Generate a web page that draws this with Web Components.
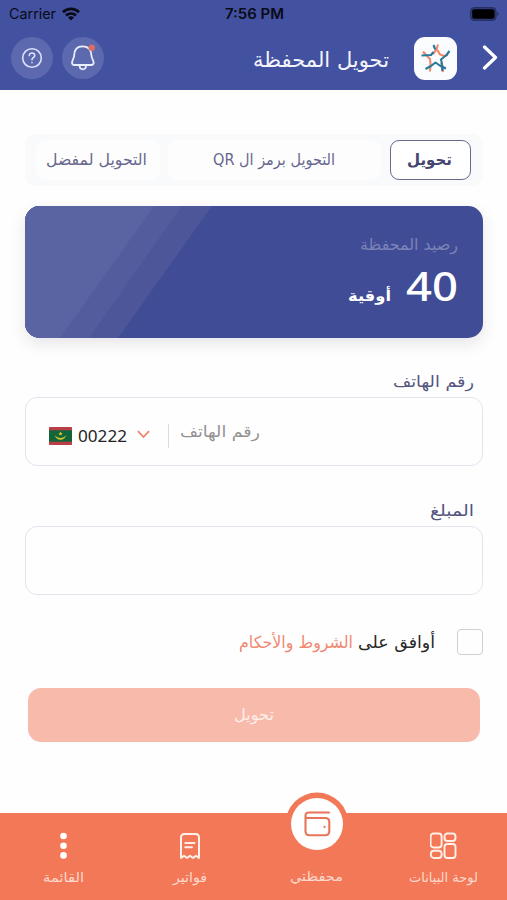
<!DOCTYPE html>
<html lang="ar">
<head>
<meta charset="utf-8">
<title>تحويل المحفظة</title>
<style>
html,body{margin:0;padding:0;background:#fefefe}
body{width:507px;height:900px;overflow:hidden;font-family:"DejaVu Sans","Noto Sans",sans-serif}
</style>
</head>
<body>
<wallet-app></wallet-app>
<script>
// Single line of text condensed or widened to the width given in `w`.
class FitText extends HTMLElement{
  connectedCallback(){
    const r=this.attachShadow({mode:'open'});
    r.innerHTML=`<style>
      :host{display:block;flex:none;height:20px;line-height:20px;white-space:nowrap;direction:ltr;text-align:left}
      span{display:inline-block;transform-origin:0 50%;line-height:inherit;vertical-align:top}
      :host([rtl]) span{direction:rtl}
    </style><span><slot></slot></span>`;
    const w=+this.getAttribute('w'), s=r.querySelector('span');
    this.style.width=w+'px';
    s.style.transform=`scaleX(${w/s.getBoundingClientRect().width})`;
  }
}
class StatusBar extends HTMLElement{
  constructor(){super();this.attachShadow({mode:'open'}).innerHTML=`<style>
    :host{display:grid;grid-template-columns:1fr auto 1fr;align-items:center;height:27px;box-sizing:border-box;padding:0 8px 0 9px;color:#090b17;font-family:Inter,sans-serif;font-size:14.5px;direction:ltr}
    .l{display:flex;align-items:center;gap:6px}
    .t{font-weight:600;font-size:14px}
    .b{justify-self:end}
    svg{display:block}
    </style>
    <div class="l"><fit-text w="47">Carrier</fit-text>
    <svg width="18" height="14" viewBox="0 0 18 14" fill="none" stroke="#090b17" stroke-width="2.7"><path d="M1 5.3C5.5 .8 12.500 .8 17 5.300"/><path d="M4 8.500C6.800 5.800 11.200 5.800 14 8.500"/><path d="M9 13.500L6 10.400C7.800 8.900 10.200 8.900 12 10.400Z" fill="#090b17" stroke="none"/></svg></div>
    <fit-text class="t" w="59">7:56 PM</fit-text>
    <svg class="b" width="29" height="14" viewBox="0 0 29 14"><rect x=".6" y=".6" width="25.500" height="12.800" rx="3.500" fill="#303b78" stroke="#252d5e"/><rect x="2.200" y="2.200" width="22.300" height="9.600" rx="1.800" fill="#000"/><path d="M27.300 5v4q1.300-.6 1.300-2t-1.300-2" fill="#252d5e"/></svg>`}
}
class AppHeader extends HTMLElement{
  constructor(){super();this.attachShadow({mode:'open'}).innerHTML=`<style>
    :host{display:block;height:90px;background:#4351a1}
    .row{display:flex;align-items:center;height:62px;padding:0 9px 0 11px;direction:ltr}
    .c{width:42px;height:42px;border-radius:50%;background:#5d69af;display:grid;place-items:center;margin-right:9px}
    .title{margin-left:auto;color:#f4f5fb;font-size:21px;padding-top:4px;margin-right:25px}
    .logo{width:43px;height:43px;border-radius:11px;background:#fbfcfd;display:grid;place-items:center;margin-right:25px}
    svg{display:block}
    </style><status-bar></status-bar>
    <div class="row">
      <div class="c"><svg width="22" height="22" viewBox="0 0 22 22" fill="none" stroke="#dce2fa" stroke-width="1.600" stroke-linecap="round"><circle cx="11" cy="11" r="9.300"/><path d="M8.300 8.600C8.300 5 13.700 5.200 13.700 8.500C13.700 10.600 11 10.600 11 12.700M11 15.500V15.700"/></svg></div>
      <div class="c"><svg width="28" height="30" viewBox="0 0 28 30" fill="none" stroke="#e9eefc" stroke-width="1.800" stroke-linejoin="round"><path d="M13.500 3.300C7.600 3.300 5.300 7.600 5.200 12.300C5.100 15.800 3 17.300 3 19.800C3 21.500 4 22 5.500 22H22C23.700 22 24.700 21.500 24.700 19.800C24.700 17.300 22.500 15.800 22.400 12.300C22.200 7.600 19.800 3.300 13.500 3.300Z"/><path d="M10.500 22.500C10.900 27.600 16.600 27.600 17.200 22.500"/><circle cx="22.800" cy="4.800" r="3.200" fill="#dc6c66" stroke="none"/></svg></div>
      <fit-text class="title" w="136">تحويل المحفظة</fit-text>
      <div class="logo"><svg width="32" height="32" viewBox="0 0 32 32" fill="none" stroke-width="2.100" stroke-linejoin="round">
        <path stroke="#f2896b" d="M18 2.500L16.500 7.500L13 12M17.500 8L19.700 12.300L24 14L28 13M3 9.500L6 13L10 17L10.500 22L10 29.500M21 21L23.500 25.500L22.500 30"/>
        <path stroke="#28799a" d="M13.500 3L15.300 7.500M1.500 13.500L11 13L13.500 10M29.500 9L26.500 13L21 17.500L21.800 21L22.300 29M5.500 27L11 24L15.500 20.500L20.500 24L26 26.500"/>
      </svg></div>
      <svg width="16" height="26" viewBox="0 0 16 26" fill="none" stroke="#fff" stroke-width="3.200" stroke-linecap="round" stroke-linejoin="round"><path d="M2.500 2L13.500 12.500L2.500 23"/></svg>
    </div>`}
}
class TransferTabs extends HTMLElement{
  constructor(){super();this.attachShadow({mode:'open'}).innerHTML=`<style>
    :host{display:grid;grid-template-columns:124px 213px 81px;column-gap:8.500px;height:52px;box-sizing:border-box;padding:6px 10.500px;border-radius:10px;background:#f9fafb;direction:ltr;color:#67678d;font-size:16px}
    div{display:grid;place-items:center;background:#fdfdfe;border-radius:9px;height:40px;box-sizing:border-box;padding-right:2px}
    .on{background:#fff;border:1.500px solid #69698e;color:#45456f;font-weight:bold}
    </style><div><fit-text w="101">التحويل لمفضل</fit-text></div><div><fit-text rtl w="122">التحويل برمز ال QR</fit-text></div><div class="on"><fit-text w="45">تحويل</fit-text></div>`}
}
class BalanceCard extends HTMLElement{
  constructor(){super();this.attachShadow({mode:'open'}).innerHTML=`<style>
    :host{display:grid;height:132px;border-radius:15px;overflow:hidden;background:#404c95;box-shadow:0 6px 16px rgba(40,40,60,.11);direction:ltr}
    svg,.in{grid-area:1/1}
    .in{display:flex;flex-direction:column;align-items:flex-end;padding:29px 25px 0 0}
    .cap{color:#7b83b7;font-size:16px}
    .amt{display:flex;align-items:baseline;gap:15px;margin-top:9px;color:#fff;font-weight:bold}
    .n{font:500 40.500px "Noto Sans",sans-serif;height:44px;line-height:44px}
    .u{font-size:15px}
    </style>
    <svg width="458" height="132" viewBox="0 0 458 132"><path d="M0 0H187L93 132H0Z" fill="#4c5699"/><path d="M0 0H157L64 132H0Z" fill="#535d9d"/><path d="M0 0H129L35 132H0Z" fill="#5b64a3"/></svg>
    <div class="in"><fit-text class="cap" w="98">رصيد المحفظة</fit-text>
    <div class="amt"><fit-text class="u" w="43">أوقية</fit-text><fit-text class="n" w="52">40</fit-text></div></div>`}
}
class FormField extends HTMLElement{
  constructor(){super();this.attachShadow({mode:'open'}).innerHTML=`<style>
    :host{display:flex;flex-direction:column;align-items:flex-end;direction:ltr;color:#54547e;font-size:16px}
    .lab{padding-right:9px}
    .box{width:100%;height:69px;box-sizing:border-box;border:1.500px solid #e3e3ee;border-radius:12px;background:#fefefe;margin-top:5px;display:flex;align-items:center;padding-left:23px}
    </style><div class="lab"><slot name="label"></slot></div><div class="box"><slot></slot></div>`}
}
class CountryCode extends HTMLElement{
  constructor(){super();this.attachShadow({mode:'open'}).innerHTML=`<style>
    :host{display:flex;align-items:center;direction:ltr}
    svg{display:block}
    .n{font:16.500px "Noto Sans",sans-serif;line-height:20px;color:#242424;margin-left:6px;padding-top:8px}
    .v{margin:6px 0 0 10px}
    .f{margin-top:9px}
    i{width:1px;height:24px;background:#dcdce4;margin:9px 11px 0 18px}
    </style><svg class="f" width="23" height="18" viewBox="0 0 23 18"><rect width="23" height="18" rx=".8" fill="#b84045"/><path d="M0 3.300H23V14.700H0Z" fill="#12653b"/><path d="M5.500 7.500C7 14.500 16 14.500 17.500 7.500C15.500 12 7.500 12 5.500 7.500Z" fill="#d8c52c"/><path d="M11.500 4.500l.7 1.500 1.500.1-1.200 1 .4 1.500-1.400-.8-1.400.8.400-1.500-1.200-1 1.500-.1Z" fill="#d8c52c"/></svg>
    <fit-text class="n" w="49">00222</fit-text>
    <svg class="v" width="13" height="9" viewBox="0 0 13 9" fill="none" stroke="#f0826b" stroke-width="1.700"><path d="M1 1.200L6.500 7L12 1.200"/></svg><i></i>`}
}
class TermsCheck extends HTMLElement{
  constructor(){super();this.attachShadow({mode:'open'}).innerHTML=`<style>
    :host{display:flex;direction:rtl;align-items:center;height:26px;font-size:16.500px;color:#262626}
    .b{box-sizing:border-box;width:26px;height:26px;border:1.500px solid #cfcfcf;border-radius:4px;margin-left:22px}
    fit-text{padding-top:2px}
    .a{color:#f08972;margin-right:5px}
    </style><div class="b"></div><fit-text w="77">أوافق على</fit-text><fit-text class="a" w="114">الشروط والأحكام</fit-text>`}
}
class SubmitButton extends HTMLElement{
  constructor(){super();this.attachShadow({mode:'open'}).innerHTML=`<style>
    :host{display:grid;place-items:center;height:54px;border-radius:13px;background:#f7baab;color:#fdeee9;font-size:16px}
    </style><slot></slot>`}
}
class NavItem extends HTMLElement{
  constructor(){super();this.attachShadow({mode:'open'}).innerHTML=`<style>
    :host{display:flex;flex-direction:column;align-items:center;color:#fcd9cc;font-size:13.500px;height:87px;padding-top:19px;box-sizing:border-box}
    .i{height:28px;display:flex;margin-bottom:7px}
    :host([active]) .i{width:52px;height:52px;box-sizing:border-box;border-radius:50%;background:#fff;box-shadow:0 0 0 5.500px #f37857;align-items:center;justify-content:center;margin:-34px 0 16px}
    </style><div class="i"><slot name="icon"></slot></div><slot></slot>`}
}
class BottomNav extends HTMLElement{
  constructor(){super();this.attachShadow({mode:'open'}).innerHTML=`<style>
    :host{display:grid;grid-template-columns:repeat(4,1fr);height:87px;background:#f37857;direction:rtl}
    svg{display:block}
    </style>
    <nav-item><svg slot="icon" width="28" height="28" viewBox="0 0 28 28" fill="none" stroke="#fff0e9" stroke-width="1.900"><rect x=".6" y="1.500" width="11" height="14" rx="3"/><rect x="14.500" y="1.500" width="11" height="7.500" rx="3"/><rect x=".9" y="18.800" width="10.700" height="7.200" rx="3"/><rect x="14.500" y="12" width="11" height="14" rx="3"/></svg><fit-text w="69">لوحة البيانات</fit-text></nav-item>
    <nav-item active><svg slot="icon" width="28" height="28" viewBox="0 0 28 28" fill="none" stroke="#e8755a" stroke-width="2.100" stroke-linecap="round" stroke-linejoin="round"><path d="M26 2.500H6Q2.500 2.500 2.500 5.500V21Q2.500 25.300 6.300 25.300H22Q26.300 25.300 26.300 21V12Q26.300 8 22 8H5Q2.500 8 2.500 5.500"/><path d="M21.500 16.700V17.100"/></svg><fit-text w="53">محفظتي</fit-text></nav-item>
    <nav-item><svg slot="icon" width="22" height="28" viewBox="0 0 22 28" fill="none" stroke="#fff0e9" stroke-width="2" stroke-linejoin="round" stroke-linecap="round"><path d="M2 26V5.500Q2 2 5.500 2H16.500Q20 2 20 5.500V26L17 23.800L14 26L11 23.800L8 26L5 23.800Z"/><path d="M6.300 11H15.500M6.300 15.200H13"/></svg><fit-text w="34">فواتير</fit-text></nav-item>
    <nav-item><svg slot="icon" width="8" height="28" viewBox="0 0 8 28" fill="#fff"><circle cx="4.500" cy="4" r="3.300"/><circle cx="4.500" cy="13.700" r="3.300"/><circle cx="4.500" cy="23.400" r="3.300"/></svg><fit-text w="41">القائمة</fit-text></nav-item>`}
}
class WalletApp extends HTMLElement{
  constructor(){super();this.attachShadow({mode:'open'}).innerHTML=`<style>
    :host{display:flex;flex-direction:column;width:507px;height:900px;background:#fefefe}
    main{flex:1;padding:44px 24.500px 0 25px}
    balance-card{margin-top:20px}
    .p{margin-top:34px}.m{margin-top:35px}
    terms-check{margin-top:34px}
    submit-button{margin:33px 2.500px 0}
    .ph{color:#929292;font-size:16px;padding-top:1px}
    </style>
    <app-header></app-header>
    <main>
      <transfer-tabs></transfer-tabs>
      <balance-card></balance-card>
      <form-field class="p"><fit-text slot="label" w="81">رقم الهاتف</fit-text><country-code></country-code><fit-text class="ph" w="80">رقم الهاتف</fit-text></form-field>
      <form-field class="m"><fit-text slot="label" w="44">المبلغ</fit-text></form-field>
      <terms-check></terms-check>
      <submit-button><fit-text w="40">تحويل</fit-text></submit-button>
    </main>
    <bottom-nav></bottom-nav>`}
}
customElements.define('fit-text',FitText);
customElements.define('status-bar',StatusBar);
customElements.define('app-header',AppHeader);
customElements.define('transfer-tabs',TransferTabs);
customElements.define('balance-card',BalanceCard);
customElements.define('form-field',FormField);
customElements.define('country-code',CountryCode);
customElements.define('terms-check',TermsCheck);
customElements.define('submit-button',SubmitButton);
customElements.define('nav-item',NavItem);
customElements.define('bottom-nav',BottomNav);
customElements.define('wallet-app',WalletApp);
</script>
</body>
</html>
